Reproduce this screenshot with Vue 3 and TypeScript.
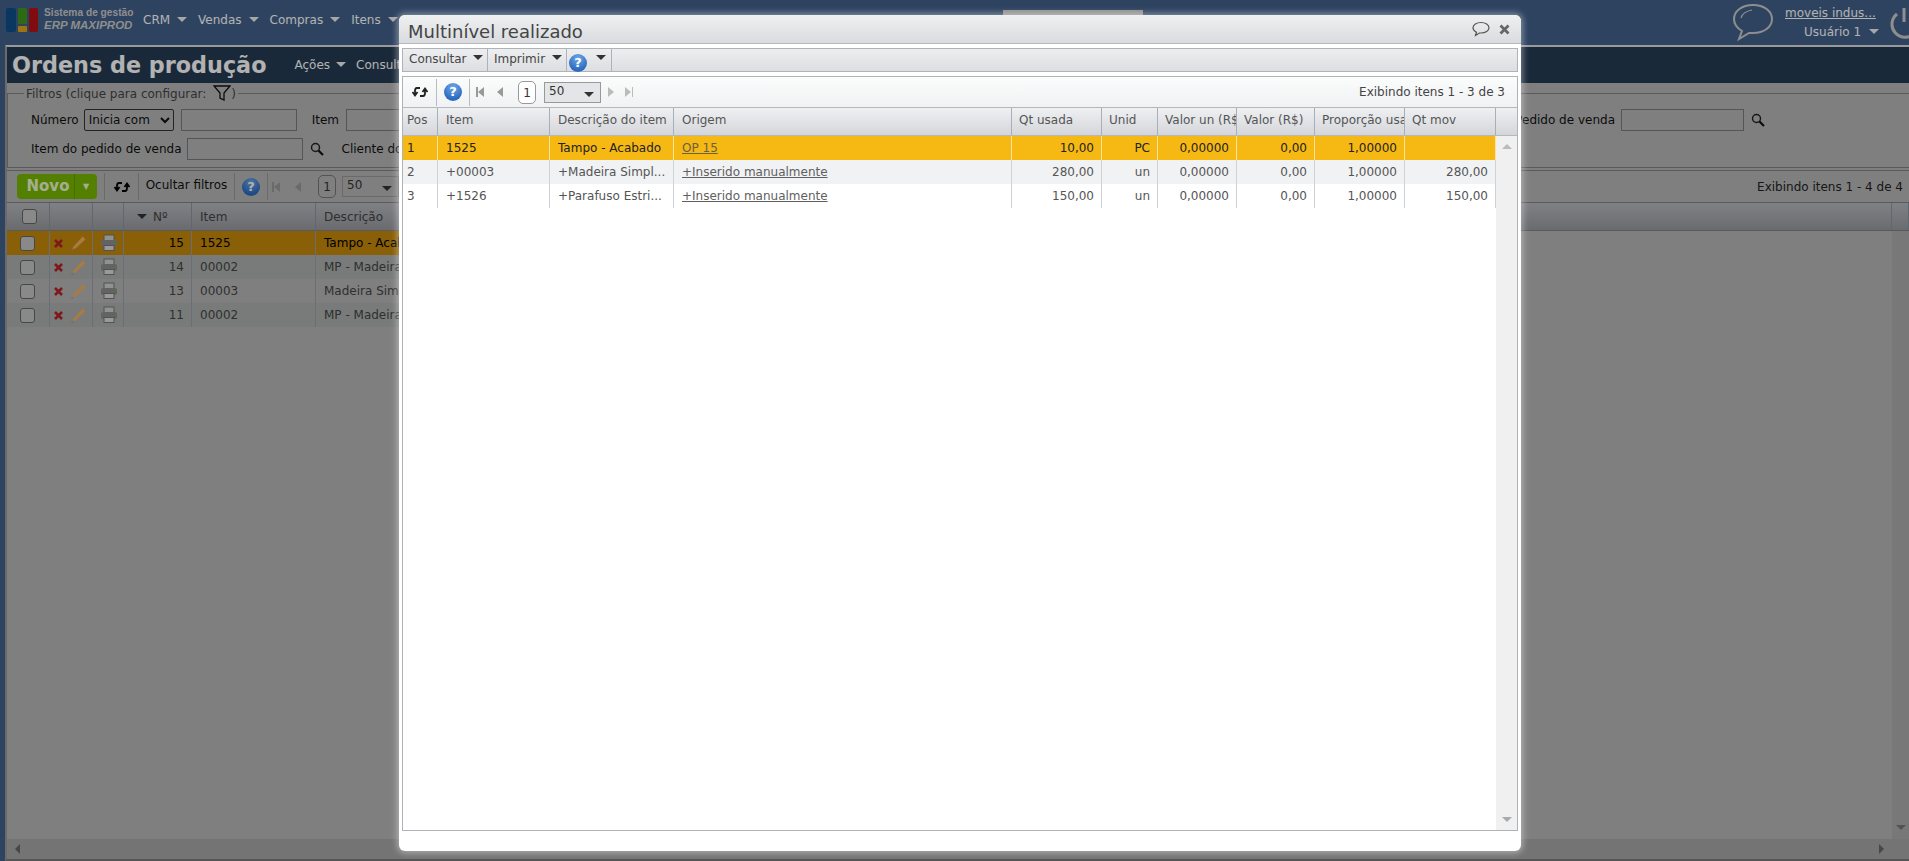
<script setup lang="ts">
interface Row { pos: string; item: string; desc: string; origem: string; qt: string; unid: string; vu: string; v: string; prop: string; mov: string }
const rows: Row[] = [
  { pos: '1', item: '1525', desc: 'Tampo - Acabado', origem: 'OP 15', qt: '10,00', unid: 'PC', vu: '0,00000', v: '0,00', prop: '1,00000', mov: '' },
  { pos: '2', item: '+00003', desc: '+Madeira Simpl...', origem: '+Inserido manualmente', qt: '280,00', unid: 'un', vu: '0,00000', v: '0,00', prop: '1,00000', mov: '280,00' },
  { pos: '3', item: '+1526', desc: '+Parafuso Estri...', origem: '+Inserido manualmente', qt: '150,00', unid: 'un', vu: '0,00000', v: '0,00', prop: '1,00000', mov: '150,00' },
]
const backRows = [
  { n: '15', item: '1525', desc: 'Tampo - Acabado' },
  { n: '14', item: '00002', desc: 'MP - Madeira' },
  { n: '13', item: '00003', desc: 'Madeira Simples' },
  { n: '11', item: '00002', desc: 'MP - Madeira' },
]
const menus = ['CRM', 'Vendas', 'Compras', 'Itens']
</script>

<template>
  <div class="page">
    <header class="topbar">
      <div class="logo">
        <svg width="34" height="34" viewBox="0 0 34 34">
          <rect x="1" y="2" width="10" height="24" rx="2" fill="#0f4f8a" />
          <rect x="13" y="2" width="9" height="16" rx="1.500" fill="#3f9a1e" />
          <rect x="13" y="20" width="9" height="6" rx="1" fill="#e0a818" />
          <rect x="24" y="2" width="9" height="24" rx="2" fill="#b81218" />
        </svg>
        <div class="logo-text">
          <div class="logo-a">Sistema de gestão</div>
          <div class="logo-b">ERP MAXIPROD</div>
        </div>
      </div>
      <nav class="menu">
        <span v-for="m in menus" :key="m" class="menu-item">{{ m }}<i class="caret light"></i></span>
      </nav>
      <div class="strip"></div>
      <div class="user">
        <svg class="chat" width="42" height="38" viewBox="0 0 42 38">
          <path d="M21 2C10 2 2 8 2 16c0 5 3 9 8 12l-3 8 10-6c1 0 3 0 4 0 11 0 19-6 19-14S32 2 21 2z" fill="none" stroke="#ccc" stroke-width="2" />
          <path d="M9 15c1-4 5-7 11-8" fill="none" stroke="#ccc" stroke-width="1.200" />
        </svg>
        <div class="user-text">
          <a class="company">moveis indus...</a>
          <div class="uname">Usuário 1 <i class="caret light"></i></div>
        </div>
        <svg class="power" width="30" height="34" viewBox="0 0 30 34">
          <path d="M8 8A13 13 0 1 0 24 8" fill="none" stroke="#ccc" stroke-width="3" />
          <path d="M15 2v14" stroke="#ccc" stroke-width="3" />
        </svg>
      </div>
    </header>

    <main class="panel">
      <div class="title-bar">
        <h1>Ordens de produção</h1>
        <span class="tb-menu first">Ações<i class="caret light"></i></span>
        <span class="tb-menu">Consultar<i class="caret light"></i></span>
      </div>

      <fieldset class="filters">
        <legend>Filtros (clique para configurar:
          <svg width="18" height="16" viewBox="0 0 18 16"><path d="M1 1h16l-6 7v7l-4-2V8z" fill="none" stroke="#111" stroke-width="1.300" /></svg>)
        </legend>
        <div class="f-row">
          <label class="l-num">Número</label>
          <select class="f-select"><option>Inicia com</option></select>
          <input class="f-in w116" />
          <label class="l-item">Item</label>
          <input class="f-in w116" />
          <span class="spacer"></span>
          <label>Pedido de venda</label>
          <input class="f-in w123" />
          <svg class="lens" width="14" height="14" viewBox="0 0 14 14"><circle cx="5.500" cy="5.500" r="4" fill="none" stroke="#222" stroke-width="1.500" /><path d="M8.500 8.500l4.500 4.500" stroke="#111" stroke-width="2.200" /></svg>
        </div>
        <div class="f-row">
          <label>Item do pedido de venda</label>
          <input class="f-in w116 tight" />
          <svg class="lens" width="14" height="14" viewBox="0 0 14 14"><circle cx="5.500" cy="5.500" r="4" fill="none" stroke="#222" stroke-width="1.500" /><path d="M8.500 8.500l4.500 4.500" stroke="#111" stroke-width="2.200" /></svg>
          <label class="l-cli">Cliente do pedido</label>
        </div>
      </fieldset>

      <div class="back-tools">
        <button class="novo"><span class="novo-l">Novo</span><span class="novo-r">▼</span></button>
        <span class="tool sync">
          <svg width="16" height="12" viewBox="0 0 16 12"><path d="M8 2H5C3.500 2 3 3 3 5v3M0.500 6L3 9.500 5.500 6M8 10h3c1.500 0 2-1 2-3V4M10.500 6L13 2.500 15.500 6" fill="none" stroke="#000" stroke-width="1.800" /></svg>
        </span>
        <span class="tool txt">Ocultar filtros</span>
        <span class="tool help"><span class="q">?</span></span>
        <span class="pager">
          <i class="p-first"></i><i class="p-prev"></i>
          <span class="pg-box">1</span>
          <span class="pg-sel">50<i class="caret dark"></i></span>
          <i class="p-next"></i><i class="p-last"></i>
        </span>
        <span class="spacer"></span>
        <span class="showing back-show">Exibindo itens 1 - 4 de 4</span>
      </div>

      <div class="back-head">
        <span class="bc c1"><i class="chk"></i></span>
        <span class="bc c2"></span>
        <span class="bc c3"></span>
        <span class="bc c4"><i class="caret dark sort"></i>Nº</span>
        <span class="bc c5">Item</span>
        <span class="bc c6">Descrição</span>
        <span class="bc c7"></span>
      </div>
      <div class="back-body">
        <div class="back-rows">
          <div v-for="(r, i) in backRows" :key="r.n" class="back-row" :class="{ sel: i === 0, alt: i % 2 === 1 }">
            <span class="bc c1"><i class="chk"></i></span>
            <span class="bc c2 acts">
              <svg width="9" height="9" viewBox="0 0 9 9"><path d="M1 1l7 7M8 1L1 8" stroke="#b3232a" stroke-width="2.600" /></svg>
              <svg width="17" height="17" viewBox="0 0 16 16"><path d="M2 13.500l1.500-3L12 1.500 14.500 4 5.500 12.500z" fill="#f0b060" /><path d="M1 15l1-2 1.500 1.300z" fill="#999" /></svg>
            </span>
            <span class="bc c3 prn">
              <svg width="18" height="18" viewBox="0 0 18 18"><rect x="4" y="1" width="10" height="6" fill="#d0d0d0" stroke="#777" /><rect x="1" y="6" width="16" height="7" rx="2" fill="#8e8e8e" /><rect x="4" y="11.500" width="10" height="5" fill="#dcdcdc" stroke="#777" /><rect x="14" y="8" width="2" height="2" fill="#5fb04a" /></svg>
            </span>
            <span class="bc c4 num">{{ r.n }}</span>
            <span class="bc c5">{{ r.item }}</span>
            <span class="bc c6 row-desc">{{ r.desc }}</span>
          </div>
        </div>
        <div class="back-vs"><i class="arr-down-back"></i></div>
      </div>
      <div class="back-scroll">
        <i class="arr-left"></i>
        <i class="arr-right"></i>
      </div>
    </main>

    <div class="overlay"></div>

    <section class="dialog">
      <div class="d-title">
        <span class="d-title-text">Multinível realizado</span>
        <svg class="d-chat" width="18" height="16" viewBox="0 0 18 16"><path d="M9 1.500C4.500 1.500 1 3.800 1 6.800c0 1.900 1.400 3.500 3.500 4.500L3.500 14.500l4-2.500h1.500c4.500 0 8-2.300 8-5.200S13.500 1.500 9 1.500z" fill="none" stroke="#555" stroke-width="1.200" /></svg>
        <svg class="d-close" width="11" height="11" viewBox="0 0 11 11"><path d="M1.500 1.500l8 8M9.500 1.500l-8 8" stroke="#666" stroke-width="2.800" /></svg>
      </div>
      <div class="d-tools">
        <span class="dt-btn w1">Consultar<i class="caret dark t"></i></span>
        <span class="dt-btn w2">Imprimir<i class="caret dark t"></i></span>
        <span class="dt-btn w3"><span class="q low">?</span><i class="caret dark t2"></i></span>
      </div>
      <div class="grid">
        <div class="g-tool">
          <span class="gt sync2">
            <svg width="16" height="12" viewBox="0 0 16 12"><path d="M8 2H5C3.500 2 3 3 3 5v3M0.500 6L3 9.500 5.500 6M8 10h3c1.500 0 2-1 2-3V4M10.500 6L13 2.500 15.500 6" fill="none" stroke="#222" stroke-width="1.800" /></svg>
          </span>
          <span class="gt help2"><span class="q">?</span></span>
          <span class="pager p2">
            <i class="p-first"></i><i class="p-prev"></i>
            <span class="pg-box">1</span>
            <span class="pg-sel">50<i class="caret dark"></i></span>
            <i class="p-next"></i><i class="p-last"></i>
          </span>
          <span class="spacer"></span>
          <span class="showing">Exibindo itens 1 - 3 de 3</span>
        </div>
        <div class="g-head">
          <span class="h pos">Pos</span>
          <span class="h item">Item</span>
          <span class="h desc">Descrição do item</span>
          <span class="h orig">Origem</span>
          <span class="h qt">Qt usada</span>
          <span class="h unid">Unid</span>
          <span class="h vu">Valor un (R$)</span>
          <span class="h v">Valor (R$)</span>
          <span class="h prop">Proporção usada</span>
          <span class="h mov">Qt mov</span>
          <span class="h sb"></span>
        </div>
        <div class="g-body">
          <div class="g-rows">
            <div v-for="(r, i) in rows" :key="r.pos" class="g-row" :class="{ sel: i === 0, alt: i === 1 }">
              <span class="d pos">{{ r.pos }}</span>
              <span class="d item">{{ r.item }}</span>
              <span class="d desc">{{ r.desc }}</span>
              <span class="d orig"><a>{{ r.origem }}</a></span>
              <span class="d qt num">{{ r.qt }}</span>
              <span class="d unid num">{{ r.unid }}</span>
              <span class="d vu num">{{ r.vu }}</span>
              <span class="d v num">{{ r.v }}</span>
              <span class="d prop num">{{ r.prop }}</span>
              <span class="d mov num">{{ r.mov }}</span>
            </div>
          </div>
          <div class="g-scroll">
            <i class="up"></i>
            <i class="down"></i>
          </div>
        </div>
      </div>
    </section>
  </div>
</template>

<style>
html, body { margin: 0; height: 100%; overflow: hidden; }
</style>

<style scoped>
.page { position: relative; width: 1909px; height: 861px; overflow: hidden; background: #42618a; font: 12px "DejaVu Sans", sans-serif; color: #222; display: flex; flex-direction: column; }
.overlay { position: absolute; inset: 0; background: rgba(0, 0, 0, .3); }
i { display: inline-block; font-style: normal; }
.spacer { flex: 1; }

.caret { width: 0; height: 0; border-left: 5px solid transparent; border-right: 5px solid transparent; border-top: 5px solid #fff; vertical-align: 2px; }
.caret.light { border-top-color: #f0f0f0; margin-left: 6px; }
.caret.dark { border-top-color: #333; }

.topbar { height: 45px; flex: none; display: flex; align-items: flex-start; background: #42618a; color: #fff; }
.logo { display: flex; margin: 6px 0 0 5px; width: 132px; flex: none; }
.logo svg { flex: none; margin-right: 5px; }
.logo-text { line-height: 14px; white-space: nowrap; }
.logo-a { font: 700 10.200px "Liberation Sans", sans-serif; color: #ccc; margin-top: 1px; }
.logo-b { font: italic 700 11.500px "Liberation Sans", sans-serif; color: #ccc; margin-top: 1px; }
.menu { display: flex; margin: 13px 0 0 6px; gap: 11px; font-size: 12px; color: #fff; }
.menu-item { white-space: nowrap; }
.menu-item .caret { margin-left: 7px; }
.strip { position: absolute; left: 1003px; top: 10px; width: 140px; height: 5px; background: #ccc; }
.user { margin-left: auto; display: flex; align-items: flex-start; }
.chat { margin: 3px 5px 0 0; }
.user-text { margin-top: 4px; line-height: 19px; width: 102px; white-space: nowrap; }
.company { text-decoration: underline; color: #fff; display: block; margin-left: 6px; }
.uname { color: #fff; margin-left: 25px; }
.uname .caret { margin-left: 4px; }
.power { margin: 6px -10px 0 8px; }

.panel { flex: 1; margin-left: 5px; border-top: 2px solid #ddd; border-left: 2px solid #999; border-bottom: 2px solid #7a7a7a; background: #b7b7b7; display: flex; flex-direction: column; position: relative; min-height: 0; }
.title-bar { height: 36px; flex: none; background: #253c53; display: flex; align-items: center; color: #fff; }
.title-bar h1 { margin: 0 0 0 5px; font: 700 22.300px "DejaVu Sans", sans-serif; color: #fff; white-space: nowrap; }
.tb-menu { font-size: 12px; white-space: nowrap; margin-left: 10px; }
.tb-menu.first { margin-left: 28px; }

.filters { margin: 2px 0 0; padding: 8px 144px 0 23px; height: 83px; flex: none; box-sizing: border-box; border: 0; border-top: 1px solid #828282; border-bottom: 1px solid #828282; border-left: 1px solid #828282; min-width: 0; position: relative; }
.filters legend { padding: 0 2px; margin-left: -7px; font-size: 12px; color: #444; }
.filters legend svg { vertical-align: -3px; margin-left: 3px; }
.f-row { display: flex; align-items: center; height: 22px; margin-bottom: 7px; }
.f-row label { white-space: nowrap; color: #111; }
.f-select { margin-left: 5px; width: 90px; height: 22px; font: 12px "DejaVu Sans", sans-serif; background: transparent; border: 1px solid #333; border-radius: 2px; box-sizing: border-box; color: #111; }
.f-in { height: 22px; box-sizing: border-box; border: 1px solid #7a7a7a; background: transparent; margin: 0 0 0 7px; padding: 0; }
.w116 { width: 116px; }
.w123 { width: 123px; margin-left: 6px; }
.tight { margin-left: 5px; }
.l-item { margin-left: 15px; }
.l-cli { margin-left: 18px; }
.lens { margin-left: 7px; }

.back-tools { margin-top: 2px; height: 32px; flex: none; display: flex; align-items: center; border-top: 1px solid #828282; box-sizing: border-box; position: relative; }
.novo { margin-left: 10px; width: 80px; height: 25px; padding: 0; border: 0; border-radius: 4px; background: #78b800; color: #eef8d0; display: flex; align-items: center; font-family: "DejaVu Sans", sans-serif; }
.novo-l { width: 58px; box-sizing: border-box; padding-left: 5px; font-weight: 700; font-size: 15px; text-align: center; border-right: 1px solid #689c00; line-height: 25px; }
.novo-r { flex: 1; font-size: 8px; text-align: center; }
.tool { display: flex; align-items: center; height: 27px; border-right: 1px solid #999; flex: none; justify-content: center; }
.tool.sync { width: 33px; margin-left: 7px; border-left: 1px solid #999; }
.tool.txt { width: 96px; white-space: nowrap; color: #111; align-items: flex-start; padding-top: 5px; box-sizing: border-box; }
.tool.help { width: 32px; }
.q { display: inline-block; width: 18px; height: 18px; border-radius: 50%; background: radial-gradient(circle at 50% 25%, #6fa8e8, #2d6bc0 70%); color: #fff; font: 700 13px/18px "DejaVu Sans", sans-serif; text-align: center; }
.pager { display: flex; align-items: center; position: relative; }
.p-first, .p-prev, .p-next, .p-last { width: 8px; height: 10px; flex: none; }
.p-first { margin-left: 4px; background: linear-gradient(#999, #999) 0 0/2px 10px no-repeat; position: relative; }
.p-first::after { content: ""; position: absolute; left: 2px; top: 0; border: 5px solid transparent; border-left: 0; border-right: 6px solid #999; }
.p-prev { margin-left: 14px; position: relative; }
.p-prev::after { content: ""; position: absolute; left: 1px; top: 0; border: 5px solid transparent; border-left: 0; border-right: 6px solid #999; }
.pg-box { margin-left: 16px; width: 18px; height: 23px; border: 1px solid #777; border-radius: 5px; box-sizing: border-box; text-align: center; line-height: 23px; color: #333; }
.pg-sel { margin-left: 6px; width: 57px; height: 21px; border: 1px solid #999; box-sizing: border-box; padding-left: 4px; line-height: 16px; position: relative; color: #333; }
.pg-sel .caret { position: absolute; right: 6px; top: 9px; }
.p-next { margin-left: 6px; position: relative; }
.p-next::after { content: ""; position: absolute; left: 1px; top: 0; border: 5px solid transparent; border-right: 0; border-left: 6px solid #bbb; }
.p-last { margin-left: 10px; background: linear-gradient(#bbb, #bbb) 7px 0/2px 10px no-repeat; position: relative; }
.p-last::after { content: ""; position: absolute; left: 0; top: 0; border: 5px solid transparent; border-right: 0; border-left: 6px solid #bbb; }
.p2 .p-first { margin-left: 6px; }
.p2 .p-prev { margin-left: 12px; }
.p2 .pg-box { margin-left: 14px; background: #fff; border-color: #999; }
.p2 .pg-sel { margin-left: 8px; background: #e3e5e8; }
.showing { margin-right: 12px; color: #444; white-space: nowrap; }
.back-show { margin-right: 6px; color: #222; }

.back-head { height: 29px; flex: none; display: flex; box-sizing: border-box; border-top: 1px solid #828282; border-bottom: 1px solid #828282; background: linear-gradient(#b6b9bd, #989aa0); }
.bc { box-sizing: border-box; display: flex; align-items: center; padding-left: 8px; border-right: 1px solid #8a94a0; white-space: nowrap; overflow: hidden; color: #444; flex: none; }
.c1 { width: 43px; justify-content: center; padding: 0; }
.c2 { width: 43px; }
.c3 { width: 31px; }
.c4 { width: 68px; }
.c5 { width: 124px; }
.c6 { width: 1576px; }
.row-desc { width: 300px; }
.c7 { flex: 1; }
.sort { margin: 0 6px 0 5px; }
.chk { width: 13px; height: 13px; border: 1px solid #666; border-radius: 3px; background: #c5c5c5; margin-left: 2px; }
.back-body { flex: 1; min-height: 0; display: flex; }
.back-rows { flex: 1; }
.back-vs { width: 17px; flex: none; background: #acacac; display: flex; flex-direction: column; justify-content: flex-end; align-items: center; padding-bottom: 9px; box-sizing: border-box; }
.back-row { height: 24px; display: flex; width: 609px; background: #b7b7b7; }
.back-row .bc { border-right-color: #9aa0a8; }
.back-row.alt { background: #acb0ae; }
.back-row.sel { background: #c5890b; }
.back-row.sel .bc { color: #000; }
.back-row .c1 .chk { width: 15px; height: 15px; margin: 0 2px 0 0; box-sizing: border-box; }
.acts { gap: 7px; padding-left: 4px; }
.prn { padding-left: 7px; padding-right: 0; width: 31px; }
.num { justify-content: flex-end; padding-right: 7px; padding-left: 0; }
.back-scroll { height: 20px; flex: none; background: #a7a7a7; display: flex; justify-content: space-between; align-items: center; padding: 0 25px 0 8px; }
.arr-left { border: 5px solid transparent; border-left: 0; border-right: 5px solid #666; }
.arr-right { border: 5px solid transparent; border-right: 0; border-left: 5px solid #666; }
.arr-down-back { border: 5px solid transparent; border-bottom: 0; border-top: 5px solid #777; }

.dialog { position: absolute; left: 399px; top: 15px; width: 1122px; height: 836px; box-sizing: border-box; background: #fff; border-radius: 6px; box-shadow: 0 0 6px 2px rgba(255, 255, 255, .4); display: flex; flex-direction: column; align-items: stretch; }
.d-title { height: 29px; flex: none; display: flex; align-items: center; box-sizing: border-box; padding: 0 11px 0 9px; border-radius: 6px 6px 0 0; border-bottom: 1px solid #b4b8bd; background: linear-gradient(#eef0f2, #d9dbde); }
.d-title-text { font-size: 18px; color: #444; white-space: nowrap; flex: 1; margin-top: 5px; }
.d-chat { margin-right: 9px; }
.d-tools { margin: 4px 3px 0; height: 24px; flex: none; display: flex; box-sizing: border-box; border: 1px solid #aeb3ba; background: linear-gradient(#eceef0, #dcdee1); }
.dt-btn { display: block; box-sizing: border-box; border-right: 1px solid #aeb3ba; height: 22px; padding: 3px 0 0 6px; color: #444; white-space: nowrap; position: relative; }
.w1 { width: 85px; }
.w2 { width: 79px; }
.w3 { width: 45px; padding: 0 !important; }
.caret.t { position: absolute; right: 4px; top: 6px; }
.caret.t2 { position: absolute; right: 5px; top: 6px; }
.q.low { position: absolute; left: 2px; top: 5px; }
.grid { margin: 4px 3px 0; height: 755px; flex: none; box-sizing: border-box; border: 1px solid #aeb3ba; display: flex; flex-direction: column; background: #fff; }
.g-tool { height: 30px; flex: none; display: flex; align-items: center; background: linear-gradient(#fbfcfc, #f0f2f3); }
.gt { height: 27px; display: flex; align-items: center; justify-content: center; flex: none; box-sizing: border-box; border-right: 1px solid #bbb; }
.gt.sync2 { width: 34px; }
.gt.help2 { width: 33px; }
.g-head { height: 29px; flex: none; display: flex; box-sizing: border-box; border-top: 1px solid #b4b8bd; border-bottom: 1px solid #b4b8bd; background: linear-gradient(#eef0f2, #d4d6da); }
.h { box-sizing: border-box; padding-left: 5px; padding-top: 5px; overflow: hidden; white-space: nowrap; color: #555; border-right: 1px solid #a9afb8; flex: none; }
.pos { width: 35px; }
.item { width: 112px; }
.desc { width: 124px; }
.orig { width: 338px; }
.qt { width: 90px; }
.unid { width: 56px; }
.vu { width: 79px; }
.v { width: 78px; }
.prop { width: 90px; }
.mov { width: 91px; }
.h.pos { padding-left: 4px; }
.h.qt, .h.unid, .h.vu, .h.v, .h.prop, .h.mov { padding-left: 7px; }
.h.item, .h.desc, .h.orig { padding-left: 8px; }
.h.sb { flex: 1; border-right: 0; }
.g-body { flex: 1; min-height: 0; display: flex; }
.g-rows { width: 1092px; flex: none; margin-right: 1px; }
.g-row { height: 24px; display: flex; background: #fff; }
.g-row.alt { background: #f1f2f4; }
.g-row.sel { background: #f6b913; }
.d { box-sizing: border-box; padding: 5px 0 0 8px; white-space: nowrap; overflow: hidden; color: #555; border-right: 1px solid #cfd3d9; flex: none; }
.d.pos { padding-left: 4px; }
.d.num { text-align: right; padding-left: 0; padding-right: 7px; }
.d a { text-decoration: underline; color: #5f5f5f; }
.sel .d { color: #222; border-right-color: #fbe3a0; }
.sel .d a { color: #6b6040; }
.g-scroll { flex: 1; background: #f0f0f0; position: relative; }
.up { position: absolute; left: 6px; top: 8px; border: 5px solid transparent; border-top: 0; border-bottom: 5px solid #bbb; }
.down { position: absolute; left: 6px; bottom: 8px; border: 5px solid transparent; border-bottom: 0; border-top: 5px solid #aaa; }
</style>
